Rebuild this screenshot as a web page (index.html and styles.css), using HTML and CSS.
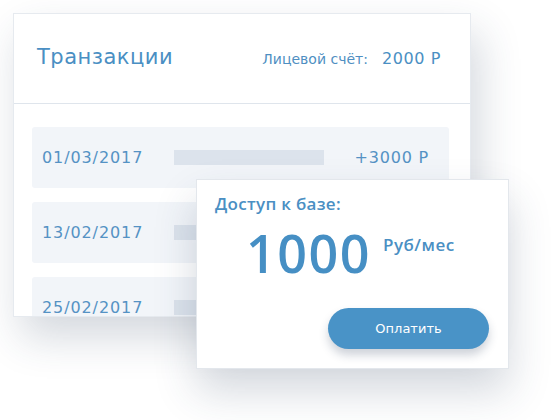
FILE: index.html
```html
<!DOCTYPE html>
<html lang="ru">
<head>
<meta charset="utf-8">
<link rel="stylesheet" href="styles.css">
</head>
<body>
<div class="scene">
  <section class="card">
    <header class="card-head">
      <h1 class="title">Транзакции</h1>
      <div class="account"><span class="account-label">Лицевой счёт:</span><span class="account-value">2000 Р</span></div>
    </header>
    <div class="list">
      <div class="row"><span class="date">01/03/2017</span><span class="bar"></span><span class="amount">+3000 Р</span></div>
      <div class="row"><span class="date">13/02/2017</span><span class="bar"></span><span class="amount"></span></div>
      <div class="row"><span class="date">25/02/2017</span><span class="bar"></span><span class="amount"></span></div>
    </div>
  </section>
  <section class="popup">
    <div class="popup-title">Доступ к базе:</div>
    <div class="price"><span class="price-num">1000</span><span class="price-unit">Руб/мес</span></div>
    <div class="popup-actions"><button class="pay">Оплатить</button></div>
  </section>
</div>
</body>
</html>
```
FILE: styles.css
```css
* { box-sizing: border-box; }
html, body { margin: 0; padding: 0; background: #fff; }
body {
  font-family: "DejaVu Sans", "Noto Sans", sans-serif;
  color: #4a8fc3;
  width: 560px;
  height: 420px;
  overflow: hidden;
}
.scene { position: relative; width: 560px; height: 420px; padding: 13px 0 0 13px; }
.card {
  width: 458px;
  height: 304px;
  background: #fff;
  border: 1px solid #e6eaef;
  overflow: hidden;
  box-shadow: 8px 20px 40px rgba(40, 60, 90, 0.2);
}
.card-head {
  height: 90px;
  border-bottom: 1px solid #dfe5ec;
  display: flex;
  align-items: center;
  justify-content: space-between;
  padding: 0 29px 0 23px;
}
.title { margin: 0; font-size: 21px; font-weight: normal; letter-spacing: 0.5px; color: #4a8fc3; padding-bottom: 4px; }
.account { font-size: 14px; display: flex; align-items: baseline; gap: 14px; }
.account-label { color: #4f8fc2; }
.account-value { font-size: 16px; letter-spacing: 0.6px; }
.list { padding: 23px 21px 0 18px; display: flex; flex-direction: column; gap: 14px; }
.row {
  height: 61px;
  background: #f2f5f9;
  border-radius: 3px;
  display: flex;
  align-items: center;
  padding: 0 20px 0 10px;
  flex-shrink: 0;
}
.date { width: 132px; font-size: 16px; letter-spacing: 0.9px; color: #5592c4; }
.bar { width: 150px; height: 15px; background: #dce3ec; }
.amount { margin-left: auto; font-size: 16px; letter-spacing: 0.8px; color: #5592c4; }
.popup {
  position: absolute;
  left: 196px;
  top: 179px;
  width: 313px;
  height: 190px;
  background: #fff;
  border: 1px solid #e3e7ec;
  box-shadow: 0 22px 40px rgba(40, 60, 90, 0.2);
  padding: 14px 19px 19px 18px;
  display: flex;
  flex-direction: column;
}
.popup-title { font-family: "Open Sans", sans-serif; font-size: 17px; line-height: 20px; font-weight: 600; letter-spacing: 0.3px; color: #4a8fc3; }
.price { display: flex; align-items: flex-start; padding-left: 31px; margin-top: 13px; }
.price-num { font-family: "Open Sans", sans-serif; font-size: 52px; font-weight: 600; line-height: 1; color: #468fc4; letter-spacing: 1.5px; }
.price-unit { font-family: "Open Sans", sans-serif; font-size: 17px; line-height: 1; font-weight: 600; margin-left: 12px; margin-top: 9px; letter-spacing: 0.5px; color: #4a8fc3; }
.popup-actions { margin-top: auto; display: flex; justify-content: flex-end; }
.pay {
  width: 161px;
  height: 41px;
  border: none;
  border-radius: 21px;
  background: #4993c7;
  color: #fff;
  font-family: inherit;
  font-size: 13px;
  box-shadow: 0 6px 10px rgba(30, 50, 80, 0.22);
}
```
